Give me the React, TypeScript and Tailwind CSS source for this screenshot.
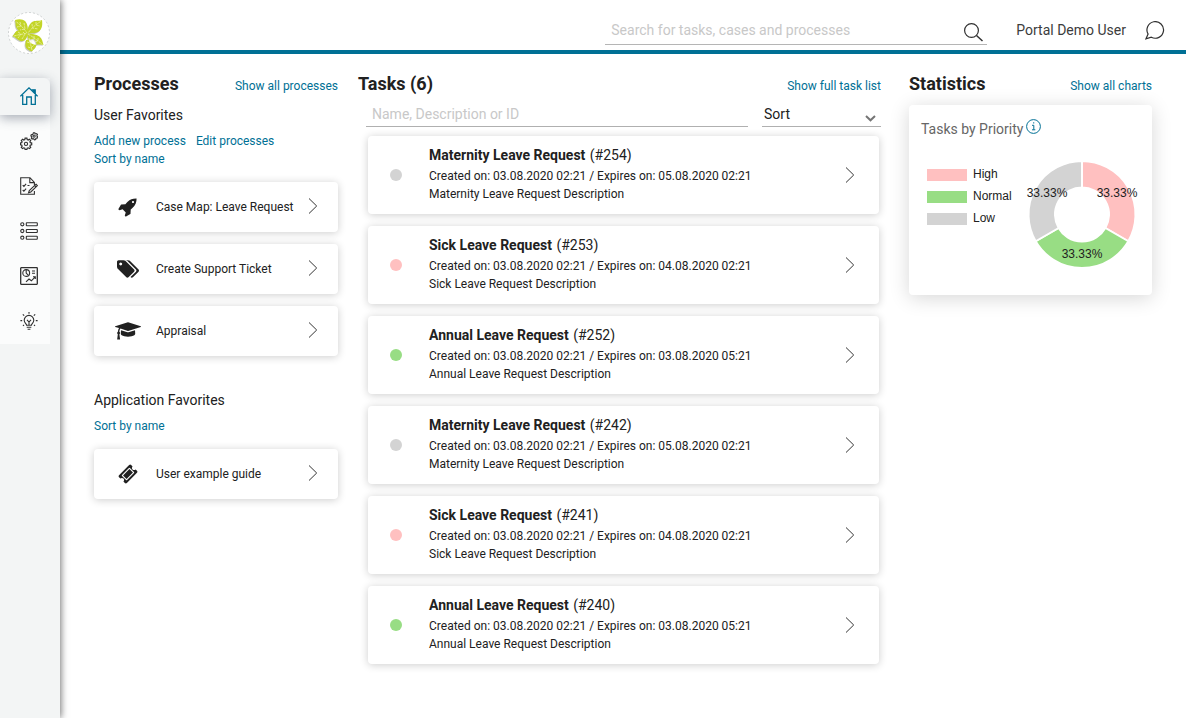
import type { ReactNode } from "react";

const link = "text-xs leading-[18px] text-[#007095] hover:underline";

function Chevron() {
  return (
    <svg width="10" height="18" viewBox="0 0 10 18" fill="none" stroke="#333" strokeWidth="1" aria-hidden="true">
      <path d="M1 1.5 8.7 9 1 16.5" />
    </svg>
  );
}

function Icon({ children, color = "#303030" }: { children: ReactNode; color?: string }) {
  return (
    <svg width="18" height="18" viewBox="0 0 18 18" fill="none" stroke={color} strokeWidth="1.1" aria-hidden="true">
      {children}
    </svg>
  );
}

const navItems: { label: string; icon: ReactNode }[] = [
  {
    label: "Processes",
    icon: (
      <Icon>
        <path
          strokeWidth="1.2"
          d="M5.1 6.2h1.8l.3 1.4 1 .4 1.2-.8 1.3 1.3-.8 1.2.4 1 1.4.3v1.8l-1.4.3-.4 1 .8 1.2-1.3 1.3-1.2-.8-1 .4-.3 1.3H5.1l-.3-1.3-1-.4-1.2.8-1.3-1.3.8-1.2-.4-1-1.2-.3V11l1.2-.3.4-1-.8-1.2 1.3-1.3 1.2.8 1-.4z"
        />
        <circle cx="6" cy="11.9" r="1.6" />
        <path d="M13.4.7h1.4l.2.9.9.4.8-.4.8 1-.6.8.2.9.7.5-.4 1.2-1 .1-.7.6v.9l-1.3.2-.5-.8-.9-.3-.9.4-.8-1 .5-.8-.2-.9-.8-.5.4-1.2 1-.1.7-.5z" />
        <circle cx="14.1" cy="4.1" r="1.1" />
      </Icon>
    ),
  },
  {
    label: "Tasks",
    icon: (
      <Icon>
        <path d="M14.4 8V5.4L10 .7H.7v16.6h13.7V14M9.8.8v4.8h4.6M2.7 8.2l1.2 1.2 2.2-2.6M2.7 13l1.2 1.2 2.2-2.6M7.5 8.5h2" />
        <path d="m16 7.2 1.4 1.4-6.600 6.400-2.300.8.8-2.300zM14.600 8.500l1.400 1.400" />
      </Icon>
    ),
  },
  {
    label: "Cases",
    icon: (
      <Icon>
        <circle cx="2.3" cy="2.3" r="1.6" />
        <circle cx="2.3" cy="9" r="1.6" />
        <circle cx="2.3" cy="15.7" r="1.6" />
        <rect x="6.3" y=".8" width="11" height="3" rx=".5" />
        <rect x="6.3" y="7.5" width="11" height="3" rx=".5" />
        <rect x="6.3" y="14.2" width="11" height="3" rx=".5" />
      </Icon>
    ),
  },
  {
    label: "Statistics",
    icon: (
      <Icon>
        <rect x=".7" y=".7" width="16.6" height="16.6" rx=".5" strokeWidth="1.3" />
        <circle cx="6.2" cy="6" r="3.4" />
        <path d="M6.2 2.6V6l2.2 2.4M12 4h3M12 6.2h3M6 14.8l3-2.8 2.4 1.8 3.8-4M13 9.7h2.3V12" />
      </Icon>
    ),
  },
  {
    label: "Ideas",
    icon: (
      <Icon>
        <path d="M6.6 13.2c0-1.3-2.4-2.3-2.4-5a4.8 4.8 0 0 1 9.6 0c0 2.7-2.4 3.7-2.4 5zM6.7 15.2h4.6M7.6 17.2h2.8M7 7.8l2 2.2 2-2.2M9 10v3M9 0v1.7M2.8 2.3l1.4 1.4M15.2 2.3l-1.4 1.4M.4 8.6h1.8M15.8 8.6h1.8M3 13.8l1-1M15 13.8l-1-1" />
      </Icon>
    ),
  },
];

const leaves =
  "M7 8c4-1.500 8-1 10.500 1.500 2.500 3 2.500 7 2 11.500C14 20.500 10 19 8.500 16 7 13.500 8 11 7 8zM34 8c.5 4 .5 8-2.500 11-3 2.500-7 2.500-12 2 0-4 1-8 4.500-11C27 8 30.500 9.500 34 8zM4.500 24c2-1.500 2-3.500 4-5 4-1.500 8-.5 11.500 2-.5 4-2 7-5 8-4 1-6-3-10.500-5zM35.500 33c-1-3-1-6-4-8.500-3.500-2.500-8-2.500-12-3 0 4 1 8 4 10 4 2.500 8 0 12 1.500zM24 39.500c-3-1-6-2.500-6.500-5.500-.5-2 .5-4 .5-6l8-1c3 3 3 6 1.500 8.500-1 1.500-2.500 2-3.500 4z";

function Logo() {
  return (
    <svg width="42" height="42" viewBox="0 0 42 42" aria-hidden="true">
      <circle cx="21" cy="21" r="20.5" fill="#fff" stroke="#d0d3d3" strokeDasharray="2 2" />
      <path fill="#8f9688" opacity=".5" transform="translate(-.8 1)" d={leaves} />
      <path fill="#c3d527" d={leaves} />
      <path
        fill="none"
        stroke="#f0f4bd"
        strokeWidth=".7"
        strokeDasharray="2.500 .8"
        d="M8.500 10c4 3 8 7 10.500 11M32.500 9.500C27 13 23 17 20 21M6 24c5-1.500 9-2 13-2.500M20 22c5 3 9 6 14 10M21 26c1 4 2 8 3 12M12 10l1 4-4 1M16 11l1 6-5 1M24 12l.5 4 5.500 1M28 10l0 3 4 1M10 20l3 2-3 4M15 20l2 2-3 5M26 24l0 3-4 1M30 26l0 3-4 1M19 30l3 1 3-2M20 35l3 1 3-3"
      />
    </svg>
  );
}

function Sidebar() {
  return (
    <aside className="relative z-10 w-15 shrink-0 bg-[#f3f5f5] shadow-[1px_0_7px_rgba(0,0,0,0.55)]">
      <a href="#" aria-label="Portal home" className="ml-2 mt-3 block size-[42px]">
        <Logo />
      </a>
      <nav aria-label="Main" className="mt-6 w-[50px] bg-[#fbfcfc]">
        <a
          href="#"
          aria-label="Dashboard"
          aria-current="page"
          className="flex h-[37px] items-start rounded-tr-md bg-[#f3f5f5] pl-5 pt-[9px] shadow-[0_3px_12px_rgba(60,70,90,0.45)]"
        >
          <Icon color="#007095">
            <path strokeWidth="1.3" d="M.4 9.300 9 .9l8.600 8.400M2.700 8v9.300h4V10h4.600v7.300h4V8" />
            <path fill="#007095" d="M12.300 2.700h3v3.500z" />
          </Icon>
        </a>
        <ul className="flex flex-col gap-[27px] pb-[14px] pl-5 pt-[17px]">
          {navItems.map((item) => (
            <li key={item.label}>
              <a href="#" aria-label={item.label} className="block">
                {item.icon}
              </a>
            </li>
          ))}
        </ul>
      </nav>
    </aside>
  );
}

function Header() {
  return (
    <header className="flex h-[54px] items-start justify-end border-b-4 border-[#007095] pr-[21px] pt-4">
      <div className="flex h-[29px] w-[382px] items-center border-b border-[#b5b5b5] pl-1.5 pr-1">
        <input
          type="search"
          aria-label="Search for tasks, cases and processes"
          placeholder="Search for tasks, cases and processes"
          className="min-w-0 flex-1 bg-transparent text-sm outline-none placeholder:text-[#c8c8c8]"
        />
        <button type="button" aria-label="Search" className="mt-1">
          <svg width="19" height="20" viewBox="0 0 19 20" fill="none" stroke="#303030" strokeWidth="1.2" aria-hidden="true">
            <circle cx="7.5" cy="8.5" r="6.900" />
            <path strokeWidth="1.5" d="m12.500 13.500 6 5.500" />
          </svg>
        </button>
      </div>
      <a href="#" className="ml-[29px] mt-1 text-sm text-[#3c3c3c]">
        Portal Demo User
      </a>
      <button type="button" aria-label="Open chat" className="ml-[19px] mt-[5px]">
        <svg width="20" height="19" viewBox="0 0 20 19" fill="none" stroke="#303030" strokeWidth="1.2" aria-hidden="true">
          <path d="M3.100 13.100A8.300 8.300 0 1 1 6.300 16.200L1 17.800z" />
        </svg>
      </button>
    </header>
  );
}

function SectionHeader({ title, action }: { title: string; action: string }) {
  return (
    <div className="flex h-6 items-center justify-between">
      <h2 className="text-lg font-bold">{title}</h2>
      <a href="#" className={`${link} mt-1`}>
        {action}
      </a>
    </div>
  );
}

function RocketIcon() {
  return (
    <svg width="20" height="20" viewBox="0 0 1792 1792" fill="currentColor" aria-hidden="true">
      <path d="M1440 448q0-40-28-68t-68-28-68 28-28 68 28 68 68 28 68-28 28-68zm224-288q0 249-75.500 430.500t-253.500 360.500q-81 80-195 176l-20 379q-2 16-16 26l-384 224q-7 4-16 4-12 0-23-9l-64-64q-13-14-8-32l85-276-281-281-276 85q-3 1-9 1-14 0-23-9l-64-64q-17-19-5-39l224-384q10-14 26-16l379-20q96-114 176-195 188-187 358-258t431-71q14 0 24 9.500t10 22.500z" />
    </svg>
  );
}

function TagsIcon() {
  return (
    <svg width="22" height="18" viewBox="0 0 1899 1515" fill="currentColor" aria-hidden="true">
      <path d="M448 320q0-53-37.500-90.500t-90.500-37.500-90.500 37.500-37.500 90.500 37.500 90.500 90.500 37.500 90.500-37.500 37.500-90.500zm1067 576q0 53-37 90l-491 492q-39 37-91 37-53 0-90-37l-715-716q-38-37-64.500-101t-26.500-117v-416q0-52 38-90t90-38h416q53 0 117 26.500t102 64.500l715 714q37 39 37 91zm384 0q0 53-37 90l-491 492q-39 37-91 37-36 0-59-14t-53-45l470-470q37-37 37-90 0-52-37-91l-715-714q-38-38-102-64.500t-117-26.500h224q53 0 117 26.500t102 64.500l715 714q37 39 37 91z" />
    </svg>
  );
}

function GraduationIcon() {
  return (
    <svg width="26" height="18" viewBox="0 0 2304 1540" fill="currentColor" aria-hidden="true">
      <path d="M1774 700l18 316q4 69-82 128t-235 93.500-323 34.500-323-34.500-235-93.500-82-128l18-316 574 181q22 7 48 7t48-7zm530-324q0 23-22 31l-1120 352q-4 1-10 1t-10-1l-652-206q-43 34-71 111.500t-34 178.500q63 36 63 109 0 69-58 107l58 433q2 14-8 25-9 11-24 11h-192q-15 0-24-11-10-11-8-25l58-433q-58-38-58-107 0-73 65-111 11-207 98-330l-333-104q-22-8-22-31t22-31l1120-352q4-1 10-1t10 1l1120 352q22 8 22 31z" />
    </svg>
  );
}

function TicketIcon() {
  return (
    <svg width="20" height="20" viewBox="0 0 1792 1792" fill="currentColor" aria-hidden="true">
      <path d="M1024 452l316 316-572 572-316-316zm-211 979l618-618q19-19 19-45t-19-45l-362-362q-18-18-45-18t-45 18l-618 618q-19 19-19 45t19 45l362 362q18 18 45 18t45-18zm889-637l-907 908q-37 37-90.500 37t-90.500-37l-126-126q56-56 56-136t-56-136-136-56-136 56l-125-126q-37-37-37-90.500t37-90.500l907-906q37-37 90.500-37t90.500 37l125 125q-56 56-56 136t56 136 136 56 136-56l126 125q37 37 37 90.500t-37 90.500z" />
    </svg>
  );
}

function ProcessCard({ name, icon }: { name: string; icon: ReactNode }) {
  return (
    <a
      href="#"
      className="flex h-[50px] items-center rounded-sm bg-white pr-5 shadow-[0_1px_8px_rgba(0,0,0,0.2)]"
    >
      <span className="ml-4 flex w-9 justify-center">{icon}</span>
      <span className="ml-2.5 flex-1 text-xs">{name}</span>
      <span className="pb-0.5">
        <Chevron />
      </span>
    </a>
  );
}

function Processes() {
  return (
    <section>
      <SectionHeader title="Processes" action="Show all processes" />
      <h3 className="mt-[9px] text-sm leading-5">User Favorites</h3>
      <div className="mt-[7px] flex flex-wrap gap-x-2.5">
        <a href="#" className={link}>Add new process</a>
        <a href="#" className={link}>Edit processes</a>
        <a href="#" className={link}>Sort by name</a>
      </div>
      <div className="mt-[14px] flex flex-col gap-3">
        <ProcessCard name="Case Map: Leave Request" icon={<RocketIcon />} />
        <ProcessCard name="Create Support Ticket" icon={<TagsIcon />} />
        <ProcessCard name="Appraisal" icon={<GraduationIcon />} />
      </div>
      <h3 className="mt-[34px] text-sm leading-5">Application Favorites</h3>
      <div className="mt-[7px] flex flex-wrap">
        <a href="#" className={link}>Sort by name</a>
      </div>
      <div className="mt-[14px]">
        <ProcessCard name="User example guide" icon={<TicketIcon />} />
      </div>
    </section>
  );
}

const low = "#d3d3d3";
const high = "#ffc0c0";
const normal = "#98dd84";

const tasks = [
  { id: 254, name: "Maternity Leave Request", expires: "05.08.2020 02:21", color: low },
  { id: 253, name: "Sick Leave Request", expires: "04.08.2020 02:21", color: high },
  { id: 252, name: "Annual Leave Request", expires: "03.08.2020 05:21", color: normal },
  { id: 242, name: "Maternity Leave Request", expires: "05.08.2020 02:21", color: low },
  { id: 241, name: "Sick Leave Request", expires: "04.08.2020 02:21", color: high },
  { id: 240, name: "Annual Leave Request", expires: "03.08.2020 05:21", color: normal },
];

function Tasks() {
  return (
    <section className="pr-2">
      <SectionHeader title="Tasks (6)" action="Show full task list" />
      <div className="ml-2 mt-1.5 flex gap-[14px]">
        <input
          type="text"
          aria-label="Filter tasks"
          placeholder="Name, Description or ID"
          className="h-[25px] min-w-0 flex-1 border-b border-[#b0b0b0] bg-transparent px-1.5 text-sm outline-none placeholder:text-[#c8c8c8]"
        />
        <div className="grid w-[119px] border-b border-[#b0b0b0]">
          <select
            aria-label="Sort tasks"
            className="col-start-1 row-start-1 h-6 appearance-none bg-transparent pl-0.5 text-sm outline-none"
          >
            <option>Sort</option>
          </select>
          <svg
            className="pointer-events-none col-start-1 row-start-1 mr-[5px] mt-[13px] justify-self-end"
            width="11"
            height="7"
            viewBox="0 0 11 7"
            fill="none"
            stroke="#757575"
            strokeWidth="2"
            aria-hidden="true"
          >
            <path d="m1 1 4.500 4.300L10 1" />
          </svg>
        </div>
      </div>
      <ul className="ml-2.5 mr-0.5 mt-[9px] flex flex-col gap-3">
        {tasks.map((t) => (
          <li key={t.id}>
            <a
              href="#"
              className="flex h-[78px] items-center rounded-sm bg-white pr-6 shadow-[0_1px_8px_rgba(0,0,0,0.2)]"
            >
              <span className="ml-[22px] size-3 rounded-full" style={{ backgroundColor: t.color }} />
              <span className="ml-[27px] flex flex-1 flex-col self-start pt-[9px]">
                <span className="mb-0.5 text-sm leading-5">
                  <b className="mr-px">{t.name}</b> (#{t.id})
                </span>
                <span className="text-xs leading-[18px]">Created on: 03.08.2020 02:21 / Expires on: {t.expires}</span>
                <span className="text-xs leading-[18px]">{t.name} Description</span>
              </span>
              <Chevron />
            </a>
          </li>
        ))}
      </ul>
    </section>
  );
}

const legend = [
  { label: "High", color: high },
  { label: "Normal", color: normal },
  { label: "Low", color: low },
];

function PriorityChart() {
  const outer = 53.5;
  const inner = 27;
  const point = (r: number, deg: number) => {
    const a = ((deg - 90) * Math.PI) / 180;
    return `${56 + r * Math.cos(a)} ${55.5 + r * Math.sin(a)}`;
  };
  return (
    <svg width="112" height="110" viewBox="0 0 112 110" role="img" aria-label="Tasks by priority">
      {legend.map((item, i) => {
        const start = i * 120;
        const end = start + 120;
        return (
          <path
            key={item.label}
            fill={item.color}
            stroke="#fff"
            strokeWidth="2"
            d={`M${point(outer, start)}A${outer} ${outer} 0 0 1 ${point(outer, end)}L${point(inner, end)}A${inner} ${inner} 0 0 0 ${point(inner, start)}Z`}
          />
        );
      })}
      <g fontSize="12" fill="#212121" textAnchor="middle" className="font-['Liberation_Sans',sans-serif]">
        <text x="91" y="38">33.33%</text>
        <text x="56" y="99">33.33%</text>
        <text x="21" y="38">33.33%</text>
      </g>
    </svg>
  );
}

function Statistics() {
  return (
    <section>
      <SectionHeader title="Statistics" action="Show all charts" />
      <div className="mt-[9px] h-[190px] rounded-sm bg-white shadow-[0_3px_20px_rgba(0,0,0,0.16)]">
        <div className="flex items-start gap-[3px] pl-3 pt-[14px]">
          <h3 className="text-sm leading-5 text-[#666]">Tasks by Priority</h3>
          <button type="button" aria-label="About this chart">
            <svg width="15" height="15" viewBox="0 0 15 15" fill="none" stroke="#007095" aria-hidden="true">
              <circle cx="7.5" cy="7.5" r="6.900" />
              <path d="M6 6.300h1.800v4.400M6 10.800h3.300M7 3.900h1.300" />
            </svg>
          </button>
        </div>
        <div className="flex justify-between pl-[18px] pr-[14px] pt-5">
          <ul className="pt-1 font-['Liberation_Sans',sans-serif]">
            {legend.map((item) => (
              <li key={item.label} className="flex h-[22px] items-center gap-1.5 text-xs">
                <span className="mt-0.5 h-3 w-10" style={{ backgroundColor: item.color }} />
                {item.label}
              </li>
            ))}
          </ul>
          <PriorityChart />
        </div>
      </div>
    </section>
  );
}

export default function App() {
  return (
    <div className="flex min-h-screen bg-white font-[Roboto,sans-serif] text-[#212121]">
      <Sidebar />
      <div className="min-w-0 flex-1">
        <Header />
        <main className="grid grid-cols-[244px_minmax(0,1fr)_243px] gap-5 px-[34px] pb-10 pt-[18px]">
          <Processes />
          <Tasks />
          <Statistics />
        </main>
      </div>
    </div>
  );
}
